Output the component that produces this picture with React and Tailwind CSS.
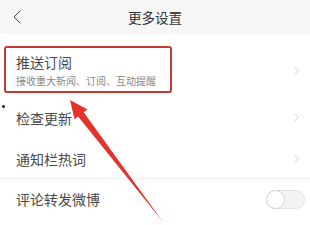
import { ChevronLeft, ChevronRight } from "lucide-react";

const font = { fontFamily: '"Noto Sans CJK SC", "Noto Sans", sans-serif' };

function Row({ title, sub, toggle, className = "" }) {
    return (
        <div className={`flex items-center justify-between pl-4 pr-[6px] ${className}`}>
            <div className="flex flex-col">
                <span className="text-[14px] leading-[18px] text-[#4a4a4a]">{title}</span>
                {sub && (
                    <span className="text-[10px] leading-[14px] text-[#888] mt-[3px]">{sub}</span>
                )}
            </div>
            {toggle ? (
                <div className="w-[39px] h-[19px] rounded-full bg-[#f3f3f3] border border-[#e2e2e2] flex items-center mr-[-1px]">
                    <div className="w-[19px] h-[19px] rounded-full bg-white border border-[#d6d6d6] ml-[-1px]" />
                </div>
            ) : (
                <ChevronRight size={15} strokeWidth={1.1} className="text-[#bdbdbd]" />
            )}
        </div>
    );
}

export default function App() {
    return (
        <div className="relative w-[310px] h-[225px] bg-white overflow-hidden" style={font}>
            {/* HEADER */}
            <div className="h-[34px] bg-[#f6f6f6] flex items-center relative">
                <ChevronLeft size={24} strokeWidth={1} className="text-[#444] ml-[5px]" />
                <span className="absolute left-0 right-0 text-center text-[13.5px] text-[#333]">
                    更多设置
                </span>
            </div>

            {/* LIST */}
            <div className="pt-[10px]">
                <Row title="推送订阅" sub="接收重大新闻、订阅、互动提醒" className="h-[52px]" />
                <Row title="检查更新" className="h-[43px]" />
                <Row title="通知栏热词" className="h-[40px] border-b border-[#f1f1f1]" />
                <Row title="评论转发微博" toggle className="h-[40px]" />
            </div>

            {/* ANNOTATIONS */}
            <div className="absolute left-[4px] top-[46px] w-[168px] h-[47px] border-2 border-[#c63a36] rounded-[3px]" />
            <div className="absolute left-[2px] top-[105px] w-[3px] h-[3px] rounded-full bg-[#222]" />
            <svg className="absolute left-0 top-0" width="310" height="225" viewBox="0 0 310 225">
                <polygon
                    points="70,100 87.5,109.5 83.7,112.2 163,222 78.1,116.4 74.5,119.2"
                    fill="#e3342c"
                />
            </svg>
        </div>
    );
}
